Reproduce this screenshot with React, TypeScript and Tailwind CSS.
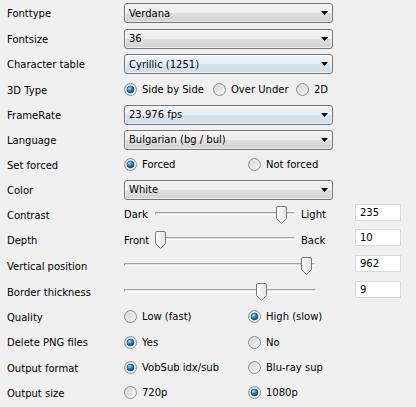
import React from "react";

function Defs() {
  return (
    <svg width="0" height="0" className="block">
      <defs>
        <linearGradient id="rbg" x1="0" y1="0" x2="1" y2="1">
          <stop offset="0" stopColor="#cfcfcf" />
          <stop offset="1" stopColor="#f9f9f9" />
        </linearGradient>
        <radialGradient id="rdot" cx="0.35" cy="0.3" r="0.75">
          <stop offset="0" stopColor="#b4e8fc" />
          <stop offset="0.45" stopColor="#2c8fcc" />
          <stop offset="1" stopColor="#0c3b66" />
        </radialGradient>
        <linearGradient id="thumb" x1="0" y1="0" x2="1" y2="0">
          <stop offset="0" stopColor="#fefefe" />
          <stop offset="1" stopColor="#e2e2e2" />
        </linearGradient>
      </defs>
    </svg>
  );
}

function Radio({ checked }: { checked?: boolean }) {
  return (
    <svg width="13" height="13" viewBox="0 0 13 13" className="shrink-0">
      <circle cx="6.5" cy="6.5" r="6" fill="url(#rbg)" stroke="#8e8f8f" strokeWidth="1" />
      <circle cx="6.5" cy="6.5" r="4.3" fill="none" stroke="#f4f4f4" strokeOpacity="0.6" strokeWidth="0.8" />
      {checked && (
        <circle cx="6.5" cy="6.5" r="3.4" fill="url(#rdot)" stroke="#18466f" strokeWidth="0.7" />
      )}
    </svg>
  );
}

function RadioItem({ label, checked, w }: { label: string; checked?: boolean; w: string }) {
  return (
    <div className={`flex items-center ${w}`}>
      <Radio checked={checked} />
      <span className="ml-[5px] whitespace-nowrap pt-[1px]">{label}</span>
    </div>
  );
}

function Dropdown({ value, blue }: { value: string; blue?: boolean }) {
  return (
    <div
      className={`flex h-[20px] w-[209px] items-center justify-between rounded-[3px] border border-[#767676] pl-[4px] pr-[4px] shadow-[inset_0_0_0_1px_rgba(255,255,255,0.55)] ${
        blue
          ? "bg-[linear-gradient(to_bottom,#eef5fa_0%,#e6eff6_50%,#d8e5ee_50%,#cfdde8_100%)]"
          : "bg-[linear-gradient(to_bottom,#f3f3f3_0%,#ececec_50%,#dfdfdf_50%,#d2d2d2_100%)]"
      }`}
    >
      <span className="whitespace-nowrap pt-[1px]">{value}</span>
      <svg width="7" height="4" viewBox="0 0 7 4">
        <polygon points="0,0 7,0 3.5,4" fill="#000" />
      </svg>
    </div>
  );
}

function Slider({ w, thumb }: { w: string; thumb: number }) {
  return (
    <div className={`relative h-[18px] shrink-0 ${w}`}>
      <div className="absolute left-0 right-0 top-[6px] h-[3px] border border-[#a3a3a3] border-b-white border-r-white bg-[#e3e3e3]" />
      <svg
        width="11"
        height="18"
        viewBox="0 0 11 18"
        className="absolute top-0"
        style={{ left: thumb }}
      >
        <path
          d="M0.5 2 Q0.5 0.5 2 0.5 H9 Q10.5 0.5 10.5 2 V12.5 L5.5 17.5 L0.5 12.5 Z"
          fill="url(#thumb)"
          stroke="#7b7b7b"
          strokeWidth="1"
        />
      </svg>
    </div>
  );
}

function Box({ value, ml }: { value: string; ml?: string }) {
  return (
    <div
      className={`mb-[5px] flex h-[17px] w-[46px] shrink-0 items-center border border-[#dadada] bg-white pl-[4px] pt-[1px] ${ml ?? ""}`}
    >
      {value}
    </div>
  );
}

function Row({ label, h, children }: { label: string; h: string; children: React.ReactNode }) {
  return (
    <div className={`flex items-center ${h}`}>
      <div className="w-[124px] shrink-0 pl-[7px] pt-[2px] whitespace-nowrap">{label}</div>
      <div className="flex items-center">{children}</div>
    </div>
  );
}

export default function App() {
  return (
    <div className="h-[407px] w-[416px] overflow-hidden bg-[#f0f0f0] font-['DejaVu_Sans','Liberation_Sans',sans-serif] text-[10px] leading-none text-black">
      <Defs />
      <Row label="Fonttype" h="h-[26px]">
        <Dropdown value="Verdana" />
      </Row>
      <Row label="Fontsize" h="h-[25px]">
        <Dropdown value="36" />
      </Row>
      <Row label="Character table" h="h-[26px]">
        <Dropdown value="Cyrillic (1251)" blue />
      </Row>
      <Row label="3D Type" h="h-[25px]">
        <RadioItem label="Side by Side" checked w="w-[89px]" />
        <RadioItem label="Over Under" w="w-[83px]" />
        <RadioItem label="2D" w="w-[30px]" />
      </Row>
      <Row label="FrameRate" h="h-[25px]">
        <Dropdown value="23.976 fps" blue />
      </Row>
      <Row label="Language" h="h-[25px]">
        <Dropdown value="Bulgarian (bg / bul)" />
      </Row>
      <Row label="Set forced" h="h-[25px]">
        <RadioItem label="Forced" checked w="w-[124px]" />
        <RadioItem label="Not forced" w="w-[90px]" />
      </Row>
      <Row label="Color" h="h-[25px]">
        <Dropdown value="White" />
      </Row>
      <Row label="Contrast" h="h-[25px]">
        <span className="w-[31px] shrink-0 pt-[1px]">Dark</span>
        <Slider w="w-[140px]" thumb={121} />
        <span className="ml-[6px] w-[54px] shrink-0 pt-[1px]">Light</span>
        <Box value="235" />
      </Row>
      <Row label="Depth" h="h-[26px]">
        <span className="w-[31px] shrink-0 pt-[1px]">Front</span>
        <Slider w="w-[140px]" thumb={0} />
        <span className="ml-[6px] w-[54px] shrink-0 pt-[1px]">Back</span>
        <Box value="10" />
      </Row>
      <Row label="Vertical position" h="h-[26px]">
        <Slider w="w-[191px]" thumb={177} />
        <Box value="962" ml="ml-[40px]" />
      </Row>
      <Row label="Border thickness" h="h-[25px]">
        <Slider w="w-[192px]" thumb={132} />
        <Box value="9" ml="ml-[39px]" />
      </Row>
      <Row label="Quality" h="h-[25px]">
        <RadioItem label="Low (fast)" w="w-[124px]" />
        <RadioItem label="High (slow)" checked w="w-[90px]" />
      </Row>
      <Row label="Delete PNG files" h="h-[26px]">
        <RadioItem label="Yes" checked w="w-[124px]" />
        <RadioItem label="No" w="w-[90px]" />
      </Row>
      <Row label="Output format" h="h-[25px]">
        <RadioItem label="VobSub idx/sub" checked w="w-[124px]" />
        <RadioItem label="Blu-ray sup" w="w-[90px]" />
      </Row>
      <Row label="Output size" h="h-[25px]">
        <RadioItem label="720p" w="w-[124px]" />
        <RadioItem label="1080p" checked w="w-[90px]" />
      </Row>
    </div>
  );
}
